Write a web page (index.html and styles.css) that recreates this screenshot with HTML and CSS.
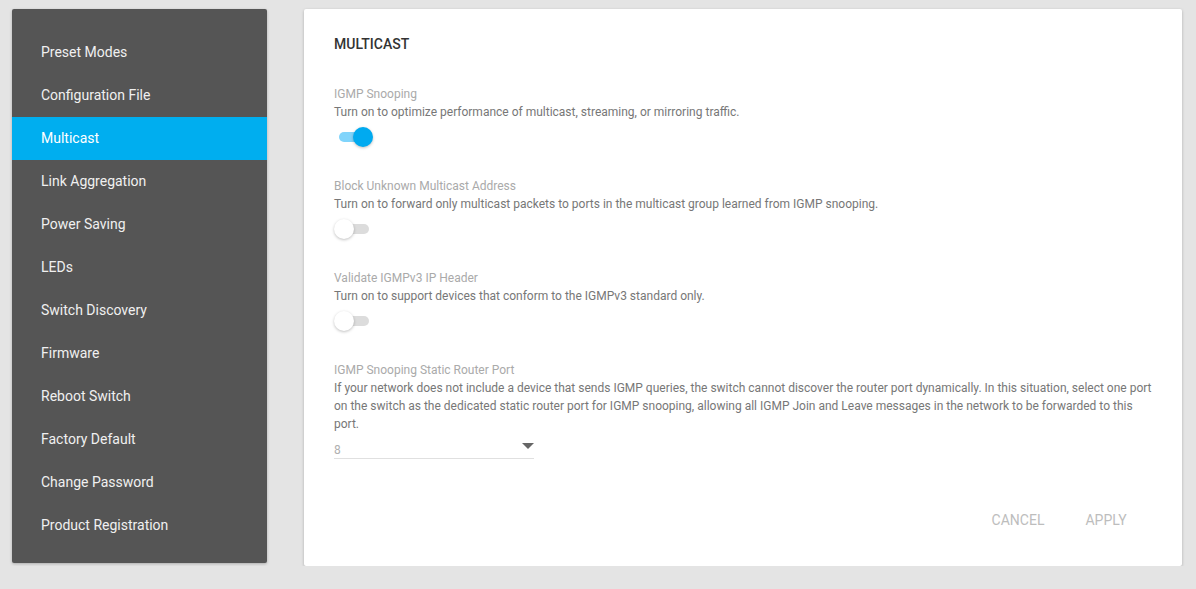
FILE: index.html
```html
<!DOCTYPE html>
<html lang="en">

<head>
    <meta charset="UTF-8">
    <meta name="viewport" content="width=device-width, initial-scale=1.0">
    <title>Multicast</title>
    <link rel="stylesheet" href="styles.css">
</head>

<body>
    <div class="page">

        <!-- Side menu -->
        <nav class="side-menu">
            <a href="#">Preset Modes</a>
            <a href="#">Configuration File</a>
            <a href="#" class="active">Multicast</a>
            <a href="#">Link Aggregation</a>
            <a href="#">Power Saving</a>
            <a href="#">LEDs</a>
            <a href="#">Switch Discovery</a>
            <a href="#">Firmware</a>
            <a href="#">Reboot Switch</a>
            <a href="#">Factory Default</a>
            <a href="#">Change Password</a>
            <a href="#">Product Registration</a>
        </nav>

        <!-- Settings card -->
        <main class="card">
            <h2 class="card-title">MULTICAST</h2>

            <div class="setting">
                <div class="setting-label">IGMP Snooping</div>
                <div class="setting-desc">Turn on to optimize performance of multicast, streaming, or mirroring traffic.</div>
                <div class="toggle on"><span class="track"></span><span class="knob"></span></div>
            </div>

            <div class="setting">
                <div class="setting-label">Block Unknown Multicast Address</div>
                <div class="setting-desc">Turn on to forward only multicast packets to ports in the multicast group learned from IGMP snooping.</div>
                <div class="toggle"><span class="track"></span><span class="knob"></span></div>
            </div>

            <div class="setting">
                <div class="setting-label">Validate IGMPv3 IP Header</div>
                <div class="setting-desc">Turn on to support devices that conform to the IGMPv3 standard only.</div>
                <div class="toggle"><span class="track"></span><span class="knob"></span></div>
            </div>

            <div class="setting">
                <div class="setting-label">IGMP Snooping Static Router Port</div>
                <div class="setting-desc wide">If your network does not include a device that sends IGMP queries, the switch cannot discover the router port dynamically. In this situation, select one port on the switch as the dedicated static router port for IGMP snooping, allowing all IGMP Join and Leave messages in the network to be forwarded to this port.</div>
                <div class="select-box">
                    <span>8</span>
                    <span class="arrow"></span>
                </div>
            </div>

            <div class="card-actions">
                <button>CANCEL</button>
                <button>APPLY</button>
            </div>
        </main>

    </div>
</body>

</html>
```

FILE: styles.css
```css
body {
    font-family: Roboto, "Liberation Sans", Arial, sans-serif;
    margin: 0;
    padding: 0;
    background-color: #e4e4e4;
}

.page {
    display: flex;
    align-items: flex-start;
    gap: 37px;
    padding: 9px 14px 0 12px;
}

/* Side menu */
.side-menu {
    width: 255px;
    flex-shrink: 0;
    display: flex;
    flex-direction: column;
    background-color: #555555;
    padding: 22px 0 16px 0;
    border-radius: 2px;
    box-shadow: 0 1px 3px rgba(0, 0, 0, 0.25);
}

.side-menu a {
    display: block;
    height: 43px;
    line-height: 43px;
    padding-left: 29px;
    color: #f0f0f0;
    font-size: 14px;
    text-decoration: none;
}

.side-menu a.active {
    background-color: #00aeef;
    color: #ffffff;
}

/* Card */
.card {
    flex: 1;
    background-color: #ffffff;
    padding: 25px 24px 28px 30px;
    border-radius: 2px;
    box-shadow: 0 1px 3px rgba(0, 0, 0, 0.25);
}

.card-title {
    margin: 0 0 32px 0;
    font-size: 14px;
    font-weight: 500;
    line-height: 20px;
    color: #333333;
}

.setting {
    margin-bottom: 29px;
}

.setting-label {
    font-size: 12px;
    line-height: 17px;
    color: #aaaaaa;
}

.setting-desc {
    font-size: 12px;
    line-height: 18px;
    color: #777777;
}

/* Toggle switch */
.toggle {
    position: relative;
    width: 40px;
    height: 24px;
    margin-top: 4px;
}

.toggle .track {
    position: absolute;
    left: 5px;
    top: 7px;
    width: 30px;
    height: 10px;
    border-radius: 5px;
    background-color: #dcdcdc;
}

.toggle .knob {
    position: absolute;
    left: 0;
    top: 2px;
    width: 20px;
    height: 20px;
    border-radius: 50%;
    background-color: #ffffff;
    box-shadow: 0 1px 3px rgba(0, 0, 0, 0.25);
}

.toggle.on .track {
    background-color: #80d4fb;
}

.toggle.on .knob {
    left: 19px;
    background-color: #00aaf0;
}

/* Select */
.select-box {
    position: relative;
    width: 200px;
    margin-top: 9px;
    font-size: 12px;
    line-height: 16px;
    color: #b0b0b0;
    border-bottom: 1px solid #e0e0e0;
}

.select-box .arrow {
    position: absolute;
    right: 0;
    top: 1px;
    width: 0;
    height: 0;
    border-left: 6px solid transparent;
    border-right: 6px solid transparent;
    border-top: 6px solid #666666;
}

/* Buttons */
.card-actions {
    display: flex;
    justify-content: flex-end;
    margin-top: 43px;
    margin-right: 8px;
}

.card-actions button {
    min-width: 88px;
    height: 36px;
    padding: 0 16px;
    border: none;
    background: none;
    font-family: inherit;
    font-size: 14px;
    color: #bdbdbd;
    cursor: pointer;
}
```
